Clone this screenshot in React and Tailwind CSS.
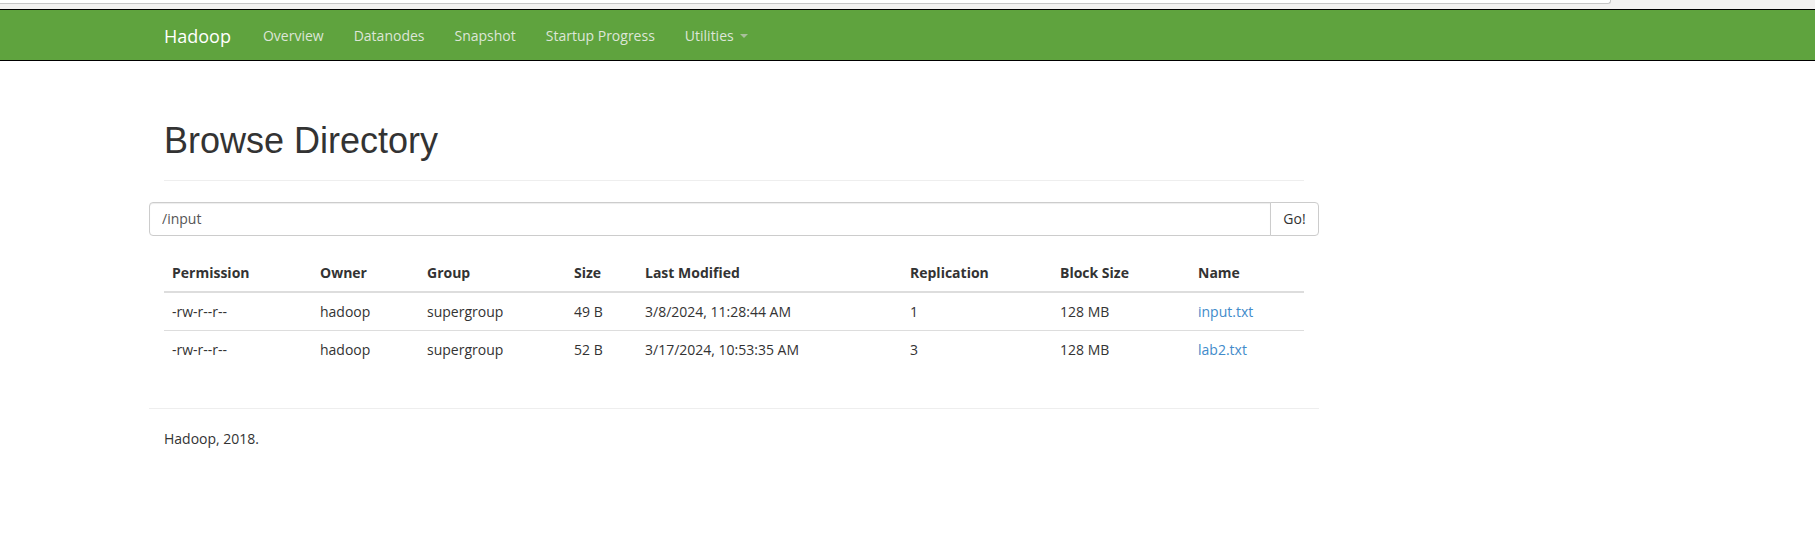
import React from 'react';

const navLinks = ['Overview', 'Datanodes', 'Snapshot', 'Startup Progress'];

const columns = [
  { name: 'Permission', w: 'w-[148px]' },
  { name: 'Owner', w: 'w-[107px]' },
  { name: 'Group', w: 'w-[147px]' },
  { name: 'Size', w: 'w-[71px]' },
  { name: 'Last Modified', w: 'w-[265px]' },
  { name: 'Replication', w: 'w-[150px]' },
  { name: 'Block Size', w: 'w-[138px]' },
  { name: 'Name', w: 'w-[114px]' },
];

const files = [
  { perm: '-rw-r--r--', owner: 'hadoop', group: 'supergroup', size: '49 B', modified: '3/8/2024, 11:28:44 AM', repl: '1', block: '128 MB', name: 'input.txt' },
  { perm: '-rw-r--r--', owner: 'hadoop', group: 'supergroup', size: '52 B', modified: '3/17/2024, 10:53:35 AM', repl: '3', block: '128 MB', name: 'lab2.txt' },
];

export default function App() {
  return (
    <div className="min-h-[542px] bg-white font-['Open_Sans',sans-serif] text-[14px] leading-[20px] text-[#333]">
      {/* browser chrome leftover */}
      <div className="h-[9px] bg-[#f2f1f0]">
        <div className="h-[4px] w-[1611px] bg-white border-b border-r border-[#c6c6c6] rounded-br-[3px]" />
      </div>

      <nav className="h-[52px] bg-[#5fa33e] border-y border-black">
        <div className="ml-[149px] flex items-center h-full pt-[2px]">
          <a className="pl-[15px] pr-[17px] text-[18px] text-white">Hadoop</a>
          {navLinks.map((l) => (
            <a key={l} className="px-[15px] text-[#dde6d8]">{l}</a>
          ))}
          <a className="px-[15px] text-[#dde6d8] flex items-center">
            Utilities
            <span className="ml-[6px] inline-block w-0 h-0 border-t-[4px] border-x-[4px] border-x-transparent border-t-[#a9c09c]" />
          </a>
        </div>
      </nav>

      <div className="ml-[149px] w-[1170px]">
        <div className="mx-[15px] mt-[60px] pb-[9px] border-b border-[#eee]">
          <h1 className="font-['Liberation_Sans',Arial,sans-serif] text-[36px] leading-[40px] mb-[10px]">Browse Directory</h1>
        </div>

        <div className="mt-[21px] flex h-[34px]">
          <input
            readOnly
            value="/input"
            className="flex-1 border border-[#ccc] rounded-l-[4px] px-[12px] text-[#555] outline-none shadow-[inset_0_1px_1px_rgba(0,0,0,0.075)]"
          />
          <button className="-ml-px w-[49px] border border-[#ccc] rounded-r-[4px] bg-white text-[#333]">Go!</button>
        </div>

        <div className="mx-[15px] mt-[19px]">
          <table className="w-full table-fixed">
            <thead>
              <tr>
                {columns.map((c) => (
                  <th key={c.name} className={`${c.w} px-[8px] py-[8px] text-left font-bold border-b-2 border-[#ddd]`}>{c.name}</th>
                ))}
              </tr>
            </thead>
            <tbody>
              {files.map((f) => (
                <tr key={f.name}>
                  <td className="px-[8px] pt-[9px] pb-[8px] border-t border-[#ddd]">{f.perm}</td>
                  <td className="px-[8px] pt-[9px] pb-[8px] border-t border-[#ddd]">{f.owner}</td>
                  <td className="px-[8px] pt-[9px] pb-[8px] border-t border-[#ddd]">{f.group}</td>
                  <td className="px-[8px] pt-[9px] pb-[8px] border-t border-[#ddd]">{f.size}</td>
                  <td className="px-[8px] pt-[9px] pb-[8px] border-t border-[#ddd]">{f.modified}</td>
                  <td className="px-[8px] pt-[9px] pb-[8px] border-t border-[#ddd]">{f.repl}</td>
                  <td className="px-[8px] pt-[9px] pb-[8px] border-t border-[#ddd]">{f.block}</td>
                  <td className="px-[8px] pt-[9px] pb-[8px] border-t border-[#ddd]">
                    <a className="text-[#428bca]">{f.name}</a>
                  </td>
                </tr>
              ))}
            </tbody>
          </table>
        </div>

        <div className="mt-[40px] border-t border-[#eee] pt-[20px] px-[15px]">
          <p>Hadoop, 2018.</p>
        </div>
      </div>
    </div>
  );
}
